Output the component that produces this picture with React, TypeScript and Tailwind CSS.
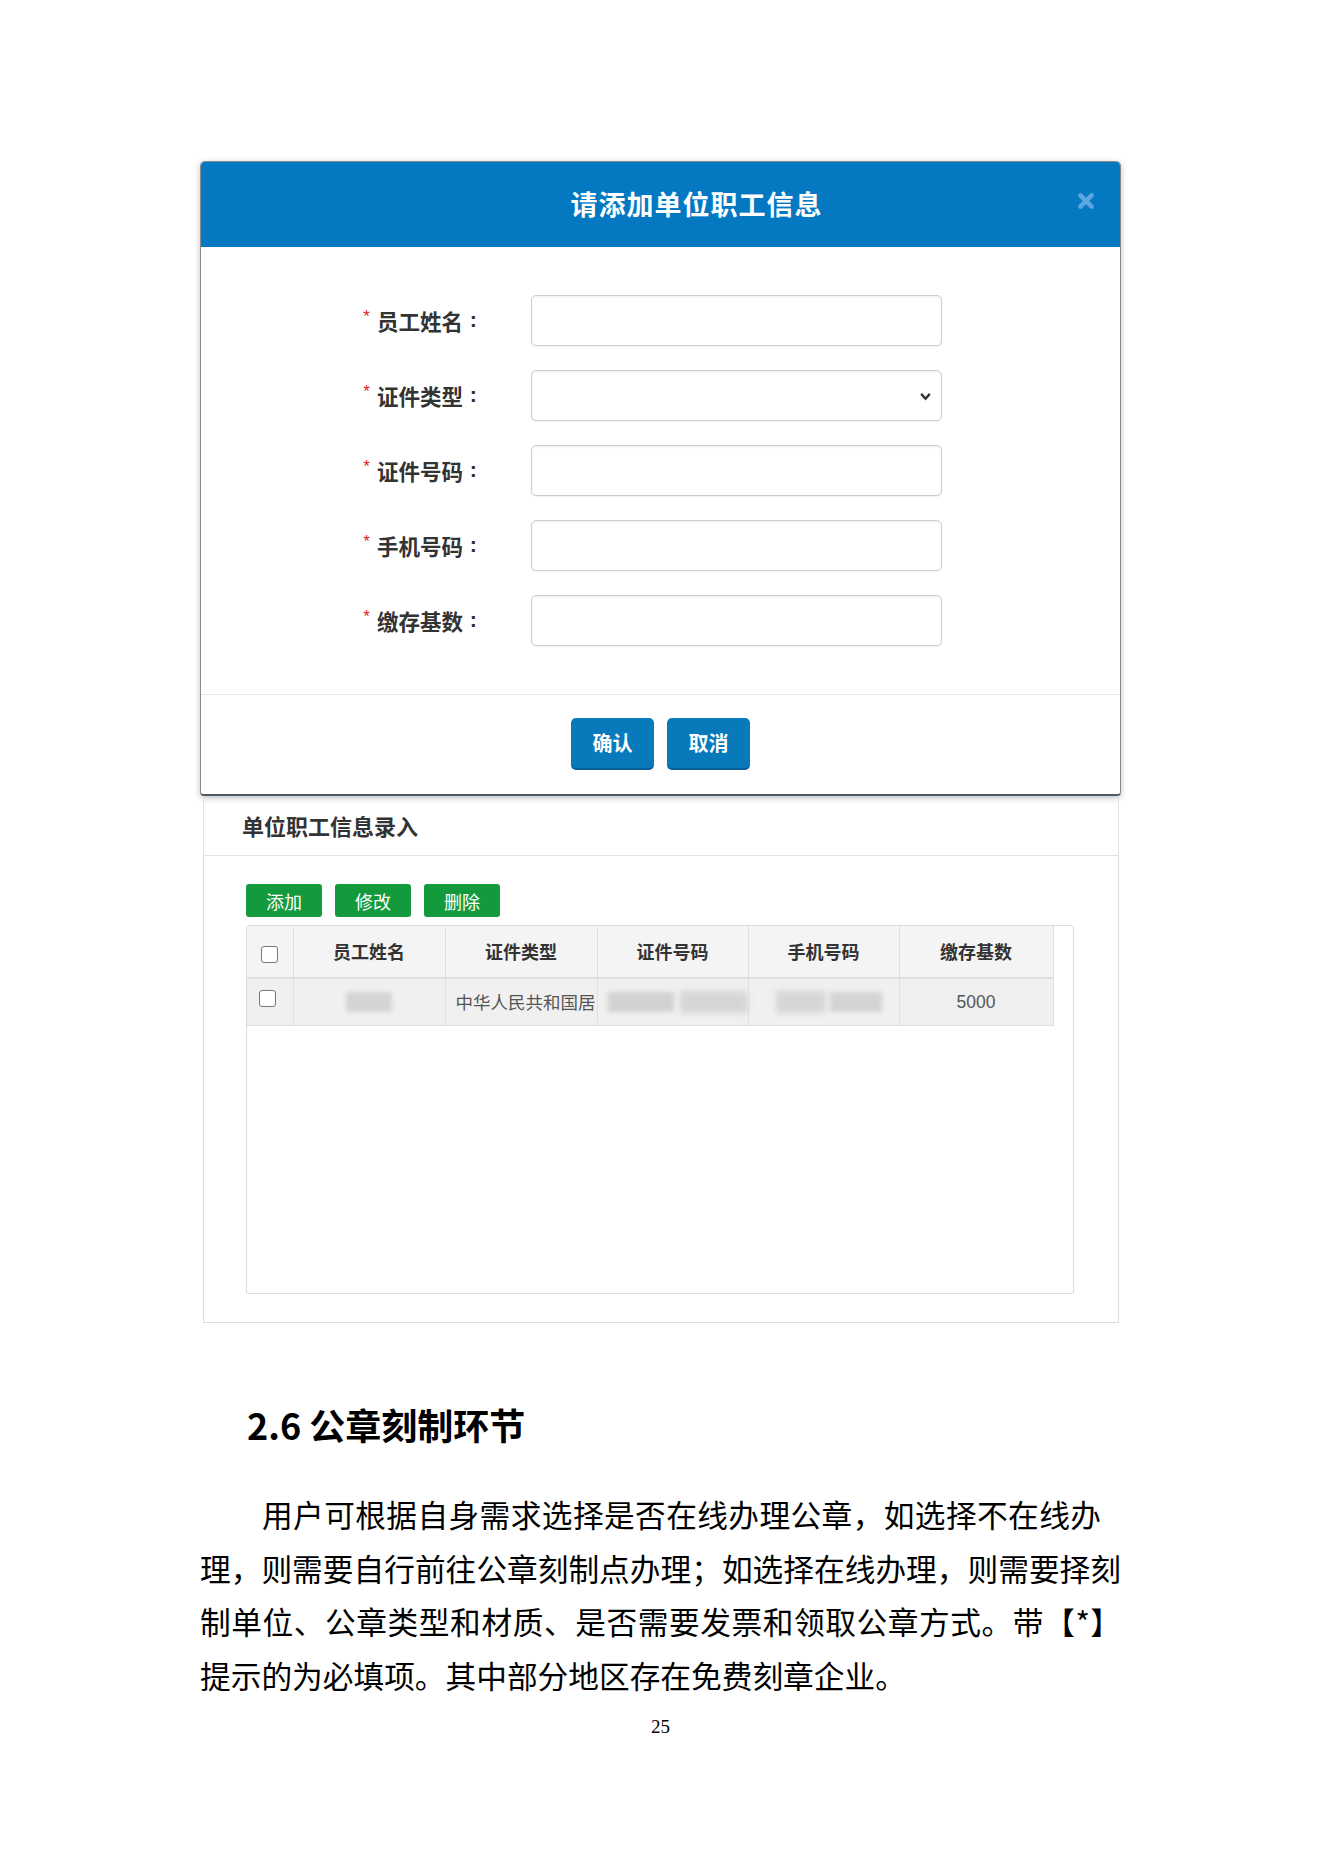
import React from "react";

const cjk = "font-['Noto_Sans_CJK_SC','Liberation_Sans',sans-serif]";

const fields = [
  { label: "员工姓名", select: false },
  { label: "证件类型", select: true },
  { label: "证件号码", select: false },
  { label: "手机号码", select: false },
  { label: "缴存基数", select: false },
];

const columns = [
  { title: "员工姓名", w: "w-[152px]" },
  { title: "证件类型", w: "w-[152px]" },
  { title: "证件号码", w: "w-[151px]" },
  { title: "手机号码", w: "w-[151px]" },
  { title: "缴存基数", w: "w-[154px]" },
];

// Form row in the modal
const FieldRow: React.FC<{ label: string; select: boolean }> = ({ label, select }) => (
  <div className="flex items-center">
    <div className="flex w-[276px] items-center justify-end text-[21.5px] font-bold leading-none text-[#333]">
      <span className="relative -top-[4px] mr-[7px] font-['Liberation_Sans',sans-serif] text-[17px] font-normal text-[#e02424]">
        *
      </span>
      <span>{label}</span>
      <span className="inline-block w-[14px] text-right font-['Liberation_Sans',sans-serif] font-bold">:</span>
    </div>
    <div className="relative ml-[54px] h-[51px] w-[411px] rounded-[5px] border border-[#cfcfcf] bg-white shadow-[inset_0_1px_2px_rgba(0,0,0,0.08),0_1px_1px_rgba(0,0,0,0.06)]">
      {select && (
        <svg
          className="absolute right-[9px] top-1/2 -translate-y-1/2"
          width="13"
          height="13"
          viewBox="0 0 12 12"
        >
          <path d="M2 4 L6 8.5 L10 4" fill="none" stroke="#333" strokeWidth="2.2" />
        </svg>
      )}
    </div>
  </div>
);

const Checkbox: React.FC = () => (
  <span className="block h-[17px] w-[17px] rounded-[3px] border border-[#777] bg-white" />
);

export default function App() {
  return (
    <div className={`min-h-[1871px] w-[1323px] bg-white ${cjk}`}>
      <div className="pl-[200px] pt-[161px]">
        {/* Modal */}
        <div className="w-[921px] overflow-hidden rounded-t-[5px] rounded-b-[4px] border border-[#8a8a8a] border-b-2 border-b-[#4d5a66] bg-white shadow-[0_2px_6px_rgba(0,0,0,0.25)]">
          <div className="relative flex h-[85px] items-center justify-center bg-[#0479c2]">
            <span className="ml-[72px] text-[27px] font-bold tracking-[1px] text-white">请添加单位职工信息</span>
            <svg
              className="absolute right-[25px] top-[30px]"
              width="18"
              height="18"
              viewBox="0 0 16 16"
            >
              <path d="M3 3 L13 13 M13 3 L3 13" stroke="#5ea6e2" strokeWidth="4" strokeLinecap="round" />
            </svg>
          </div>
          <div className="flex flex-col gap-[24px] pb-[48px] pt-[48px]">
            {fields.map((f) => (
              <FieldRow key={f.label} label={f.label} select={f.select} />
            ))}
          </div>
          <div className="flex items-center justify-center gap-[13px] border-t border-[#e8e8e8] pb-[24px] pt-[23px]">
            <button className="h-[52px] w-[83px] rounded-[5px] border-b-2 border-[#05609a] bg-[#0879bb] text-[20px] font-bold text-white">
              确认
            </button>
            <button className="h-[52px] w-[83px] rounded-[5px] border-b-2 border-[#05609a] bg-[#0879bb] text-[20px] font-bold text-white">
              取消
            </button>
          </div>
        </div>

        {/* Underlying panel */}
        <div className="ml-[3px] w-[916px]">
          <div className="flex h-[60px] items-center border-x border-b border-[#e2e2e2] pl-[38px]">
            <span className="text-[22px] font-bold text-[#333]">单位职工信息录入</span>
          </div>
          <div className="border-x border-b border-[#dcdcdc] pb-[28px] pl-[42px] pt-[28px]">
            <div className="flex gap-[13px]">
              {["添加", "修改", "删除"].map((t) => (
                <button
                  key={t}
                  className="h-[33px] w-[76px] rounded-[3px] bg-[#139a3d] text-[18px] leading-none text-white"
                >
                  {t}
                </button>
              ))}
            </div>
            <div className="mt-[8px] h-[369px] w-[828px] rounded-[3px] border border-[#dcdcdc]">
              <table className="w-[806px] table-fixed border-collapse">
                <thead>
                  <tr className="h-[52px] border-b-2 border-[#dedede] bg-[#f4f4f4]">
                    <th className="w-[46px] border-r border-[#e0e0e0] align-middle">
                      <div className="flex justify-center pt-[6px]">
                        <Checkbox />
                      </div>
                    </th>
                    {columns.map((c) => (
                      <th
                        key={c.title}
                        className={`${c.w} border-r border-[#e0e0e0] text-[18px] font-bold text-[#333]`}
                      >
                        {c.title}
                      </th>
                    ))}
                  </tr>
                </thead>
                <tbody>
                  <tr className="h-[47px] border-b border-[#dedede] bg-[#f0f0f0]">
                    <td className="border-r border-[#e0e0e0] align-top">
                      <div className="pl-[12px] pt-[11px]">
                        <Checkbox />
                      </div>
                    </td>
                    <td className="border-r border-[#e0e0e0]">
                      <div className="mx-auto h-[20px] w-[46px] bg-[#d4d4d4] blur-[2px]" />
                    </td>
                    <td className="whitespace-nowrap border-r border-[#e0e0e0] pl-[10px] text-[17.5px] text-[#555]">
                      中华人民共和国居
                    </td>
                    <td className="border-r border-[#e0e0e0]">
                      <div className="flex items-center gap-[6px] pl-[10px]">
                        <div className="h-[20px] w-[66px] bg-[#d2d2d2] blur-[2px]" />
                        <div className="h-[22px] w-[68px] bg-[#d6d6d6] blur-[3px]" />
                      </div>
                    </td>
                    <td className="border-r border-[#e0e0e0]">
                      <div className="flex items-center gap-[4px] pl-[27px]">
                        <div className="h-[22px] w-[50px] bg-[#d6d6d6] blur-[3px]" />
                        <div className="h-[20px] w-[52px] bg-[#d4d4d4] blur-[2px]" />
                      </div>
                    </td>
                    <td className="border-r border-[#e0e0e0] text-center font-['Liberation_Sans',sans-serif] text-[17.5px] text-[#555]">
                      5000
                    </td>
                  </tr>
                </tbody>
              </table>
            </div>
          </div>
        </div>

        {/* Document text */}
        <h2 className="mt-[77px] pl-[47px] text-[36px] font-bold leading-[48px] text-black">2.6 公章刻制环节</h2>
        <div className="mt-[39px] w-[921px] text-[30.7px] leading-[53.5px] text-black">
          <div className="indent-[62px] tracking-[0.4px]">用户可根据自身需求选择是否在线办理公章，如选择不在线办</div>
          <div className="text-justify [text-align-last:justify]">
            理，则需要自行前往公章刻制点办理；如选择在线办理，则需要择刻
          </div>
          <div className="text-justify [text-align-last:justify]">
            制单位、公章类型和材质、是否需要发票和领取公章方式。带【*】
          </div>
          <div>提示的为必填项。其中部分地区存在免费刻章企业。</div>
        </div>
        <div className="mt-[14px] w-[921px] text-center font-['Liberation_Serif',serif] text-[19px] leading-[24px] text-black">
          25
        </div>
      </div>
    </div>
  );
}
